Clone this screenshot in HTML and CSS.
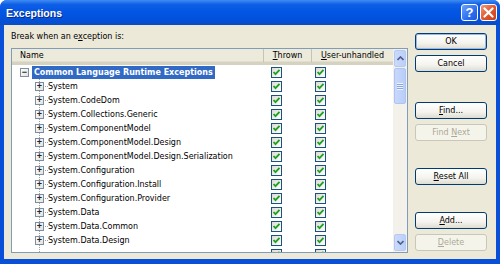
FILE: index.html
```html
<!doctype html>
<html>
  <head>
    <title>Exceptions</title>
    <meta name="viewport" content="width=device-width, initial-scale=1">
    <link rel="stylesheet" href="styles.css">
  </head>
  <body>
    <div class="window">
      <div class="titlebar">
        <span class="title">Exceptions</span>
        <span class="caption-buttons">
          <span class="cap help">?</span>
          <span class="cap close">
            <svg width="11" height="11" viewBox="0 0 11 11"><path d="M1.5 1.5 L9.5 9.5 M9.5 1.5 L1.5 9.5" stroke="#fff" stroke-width="2.2" stroke-linecap="round"/></svg>
          </span>
        </span>
      </div>
      <div class="client">
        <div class="main">
          <div class="label">Break when an e<u>x</u>ception is:</div>
          <div class="listbox">
            <div class="grid">
              <div class="header">
                <div class="hcell name">Name</div>
                <div class="hcell thrown"><u>T</u>hrown</div>
                <div class="hcell user"><u>U</u>ser-unhandled</div>
              </div>
              <div class="rows">
                <div class="row root">
                  <div class="cell name"><span class="expander"><span class="box">&minus;</span></span><span class="text selected">Common Language Runtime Exceptions</span></div>
                  <div class="cell thrown"><span class="check"></span></div>
                  <div class="cell user"><span class="check"></span></div>
                </div>
                <div class="row child">
                  <div class="cell name"><span class="twig"><span class="box">+</span></span><span class="text">System</span></div>
                  <div class="cell thrown"><span class="check"></span></div>
                  <div class="cell user"><span class="check"></span></div>
                </div>
                <div class="row child">
                  <div class="cell name"><span class="twig"><span class="box">+</span></span><span class="text">System.CodeDom</span></div>
                  <div class="cell thrown"><span class="check"></span></div>
                  <div class="cell user"><span class="check"></span></div>
                </div>
                <div class="row child">
                  <div class="cell name"><span class="twig"><span class="box">+</span></span><span class="text">System.Collections.Generic</span></div>
                  <div class="cell thrown"><span class="check"></span></div>
                  <div class="cell user"><span class="check"></span></div>
                </div>
                <div class="row child">
                  <div class="cell name"><span class="twig"><span class="box">+</span></span><span class="text">System.ComponentModel</span></div>
                  <div class="cell thrown"><span class="check"></span></div>
                  <div class="cell user"><span class="check"></span></div>
                </div>
                <div class="row child">
                  <div class="cell name"><span class="twig"><span class="box">+</span></span><span class="text">System.ComponentModel.Design</span></div>
                  <div class="cell thrown"><span class="check"></span></div>
                  <div class="cell user"><span class="check"></span></div>
                </div>
                <div class="row child">
                  <div class="cell name"><span class="twig"><span class="box">+</span></span><span class="text">System.ComponentModel.Design.Serialization</span></div>
                  <div class="cell thrown"><span class="check"></span></div>
                  <div class="cell user"><span class="check"></span></div>
                </div>
                <div class="row child">
                  <div class="cell name"><span class="twig"><span class="box">+</span></span><span class="text">System.Configuration</span></div>
                  <div class="cell thrown"><span class="check"></span></div>
                  <div class="cell user"><span class="check"></span></div>
                </div>
                <div class="row child">
                  <div class="cell name"><span class="twig"><span class="box">+</span></span><span class="text">System.Configuration.Install</span></div>
                  <div class="cell thrown"><span class="check"></span></div>
                  <div class="cell user"><span class="check"></span></div>
                </div>
                <div class="row child">
                  <div class="cell name"><span class="twig"><span class="box">+</span></span><span class="text">System.Configuration.Provider</span></div>
                  <div class="cell thrown"><span class="check"></span></div>
                  <div class="cell user"><span class="check"></span></div>
                </div>
                <div class="row child">
                  <div class="cell name"><span class="twig"><span class="box">+</span></span><span class="text">System.Data</span></div>
                  <div class="cell thrown"><span class="check"></span></div>
                  <div class="cell user"><span class="check"></span></div>
                </div>
                <div class="row child">
                  <div class="cell name"><span class="twig"><span class="box">+</span></span><span class="text">System.Data.Common</span></div>
                  <div class="cell thrown"><span class="check"></span></div>
                  <div class="cell user"><span class="check"></span></div>
                </div>
                <div class="row child">
                  <div class="cell name"><span class="twig"><span class="box">+</span></span><span class="text">System.Data.Design</span></div>
                  <div class="cell thrown"><span class="check"></span></div>
                  <div class="cell user"><span class="check"></span></div>
                </div>
                <div class="row child">
                  <div class="cell name"><span class="twig"></span></div>
                  <div class="cell thrown"><span class="check"></span></div>
                  <div class="cell user"><span class="check"></span></div>
                </div>
              </div>
            </div>
            <div class="vscroll">
              <div class="sbtn">
                <svg width="7" height="5" viewBox="0 0 7 5"><path d="M0.5 4 L3.5 1 L6.5 4" fill="none" stroke="#4D6185" stroke-width="1.6"/></svg>
              </div>
              <div class="thumb"><span class="grip"></span></div>
              <div class="track"></div>
              <div class="sbtn">
                <svg width="7" height="5" viewBox="0 0 7 5"><path d="M0.5 1 L3.5 4 L6.5 1" fill="none" stroke="#4D6185" stroke-width="1.6"/></svg>
              </div>
            </div>
          </div>
        </div>
        <div class="buttons">
          <button class="btn default">OK</button>
          <button class="btn">Cancel</button>
          <button class="btn gap-lg"><u>F</u>ind...</button>
          <button class="btn" disabled>Find <u>N</u>ext</button>
          <button class="btn gap-md"><u>R</u>eset All</button>
          <button class="btn gap-md"><u>A</u>dd...</button>
          <button class="btn" disabled><u>D</u>elete</button>
        </div>
      </div>
    </div>
  </body>
</html>
```
FILE: styles.css
```css
html, body {
  margin: 0;
  background: #fff;
}
body {
  font-family: "DejaVu Sans", Verdana, sans-serif;
  font-size: 8px;
  color: #000;
}
.window {
  width: 500px;
  height: 264px;
  display: flex;
  flex-direction: column;
  background: #0a4fd8;
  border-radius: 7px 7px 0 0;
  overflow: hidden;
}
.titlebar {
  height: 25px;
  flex: none;
  display: flex;
  align-items: center;
  justify-content: space-between;
  padding: 0 3px 0 6px;
  background: linear-gradient(#3f8cf3, #0f5fe6 18%, #0356e4 45%, #0251dd 75%, #0a4cc4);
}
.title {
  color: #fff;
  font-family: "Liberation Sans", Arial, sans-serif;
  font-weight: bold;
  font-size: 10.5px;
  text-shadow: 1px 1px 0 #0a2a86;
}
.caption-buttons {
  display: flex;
  gap: 2px;
}
.cap {
  width: 17px;
  height: 17px;
  border: 1px solid #fff;
  border-radius: 3px;
  display: flex;
  align-items: center;
  justify-content: center;
  color: #fff;
  font-family: "Liberation Sans", Arial, sans-serif;
  font-weight: bold;
  font-size: 13px;
  box-sizing: border-box;
}
.help {
  background: linear-gradient(135deg, #6ea2fb, #2c6ef2 60%, #1d5ad8);
}
.close {
  background: linear-gradient(135deg, #f09a7c, #e0542a 55%, #c7401a);
}
.client {
  flex: 1;
  min-height: 0;
  display: flex;
  margin: 0 4px 5px;
  background: #ece9d8;
  padding: 0 0 6px 7px;
  gap: 7px;
}
.main {
  width: 397px;
  display: flex;
  flex-direction: column;
  min-height: 0;
}
.label {
  height: 14px;
  line-height: 14px;
  margin: 5px 0 4px;
}
.listbox {
  flex: 1;
  min-height: 0;
  display: flex;
  border: 1px solid #7f9db9;
  background: #fff;
  overflow: hidden;
}
.grid {
  flex: 1;
  min-height: 0;
  display: flex;
  flex-direction: column;
  overflow: hidden;
}
.header {
  height: 13px;
  display: flex;
  background: #ebeadb;
  border-bottom: 3px solid #d6d2c2;
  box-shadow: inset 0 -1px 0 #e2decd;
  flex: none;
}
.hcell {
  line-height: 13px;
}
.hcell.name {
  width: 252px;
  padding-left: 8px;
  box-sizing: border-box;
  border-right: 1px solid #c7c5b2;
}
.hcell.thrown {
  width: 47px;
  text-align: center;
  border-right: 1px solid #c7c5b2;
}
.hcell.user {
  width: 81px;
  text-align: center;
}
.rows {
  flex: 1;
  min-height: 0;
  overflow: hidden;
}
.row {
  height: 14px;
  display: flex;
  align-items: center;
}
.cell.name {
  width: 252px;
  display: flex;
  align-items: center;
  height: 14px;
}
.cell.thrown {
  width: 48px;
  padding-left: 7px;
  box-sizing: border-box;
  display: flex;
}
.cell.user {
  width: 81px;
  padding-left: 3px;
  box-sizing: border-box;
  display: flex;
}
.expander {
  width: 12px;
  padding-left: 8px;
  height: 14px;
  display: flex;
  align-items: center;
}
.twig {
  width: 13px;
  margin-left: 23px;
  height: 14px;
  display: flex;
  align-items: center;
  background-image:
    linear-gradient(#a0a0a0 50%, transparent 50%),
    linear-gradient(90deg, #a0a0a0 50%, transparent 50%);
  background-size: 1px 2px, 2px 1px;
  background-repeat: repeat-y, repeat-x;
  background-position: 4px 0, 4px 7px;
}
.box {
  width: 9px;
  height: 9px;
  box-sizing: border-box;
  border: 1px solid #7a8ea6;
  background: linear-gradient(135deg, #fff, #e4e2d8);
  display: flex;
  align-items: center;
  justify-content: center;
  font-family: "Liberation Sans", Arial, sans-serif;
  font-size: 9px;
  line-height: 7px;
  font-weight: bold;
  color: #22262c;
}
.text {
  white-space: nowrap;
  line-height: 13px;
  padding: 0 2px;
}
.child .text {
  padding-left: 0;
}
.text.selected {
  background: #316ac5;
  color: #fff;
  font-weight: bold;
}
.check {
  width: 11px;
  height: 11px;
  box-sizing: border-box;
  border: 1px solid #1c5180;
  background-image: url("data:image/svg+xml,%3Csvg xmlns='http://www.w3.org/2000/svg' width='9' height='9'%3E%3Cpath d='M1.5 4 L3.5 6.2 L7.5 1.8' fill='none' stroke='%2321a121' stroke-width='1.8'/%3E%3C/svg%3E"), linear-gradient(135deg, #dcdcd6, #fff);
  background-repeat: no-repeat;
}
.vscroll {
  width: 14px;
  display: flex;
  flex-direction: column;
  background: #f3f1ea;
}
.sbtn {
  height: 15px;
  margin: 1px 1px 0;
  border: 1px solid #b6c9f2;
  border-radius: 2px;
  background: linear-gradient(90deg, #cbdafc, #bccff9);
  display: flex;
  align-items: center;
  justify-content: center;
  flex: none;
}
.sbtn:last-child {
  margin: 0 1px 1px;
}
.thumb {
  height: 34px;
  margin: 1px 1px 0;
  border: 1px solid #b0c4f1;
  border-radius: 2px;
  background: linear-gradient(90deg, #c8d8fc, #b9cdf8);
  display: flex;
  align-items: center;
  justify-content: center;
  flex: none;
}
.grip {
  width: 6px;
  height: 7px;
  background: repeating-linear-gradient(#eef3fe 0 1px, #8ca4dc 1px 2px);
}
.track {
  flex: 1;
}
.buttons {
  width: 72px;
  display: flex;
  flex-direction: column;
  padding-top: 8px;
  gap: 5px;
}
.btn {
  height: 17px;
  width: 72px;
  padding: 0;
  font: inherit;
  color: #000;
  border: 1px solid #003c74;
  border-radius: 3px;
  background: linear-gradient(#fff, #f4f3ee 60%, #dedcd2);
}
.btn.default {
  box-shadow: inset 0 0 0 1px #98b8ea;
}
.btn:disabled {
  border-color: #c9c7ba;
  color: #aca899;
  background: #f5f4ea;
}
.btn.gap-lg {
  margin-top: 25px;
}
.btn.gap-md {
  margin-top: 22px;
}
```
